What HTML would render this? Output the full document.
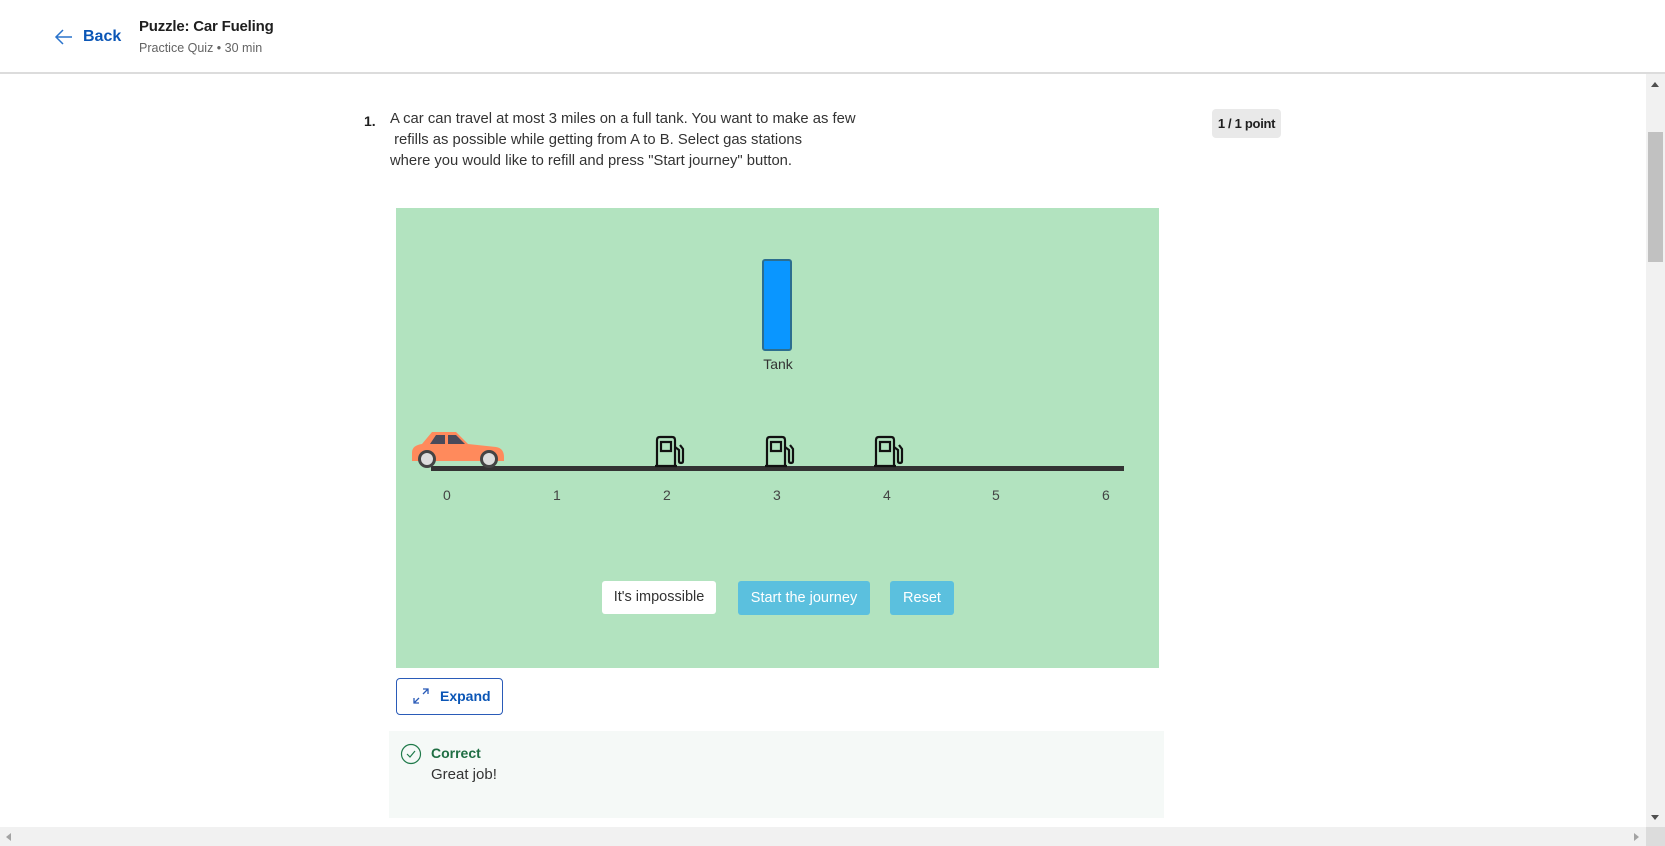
<!DOCTYPE html>
<html><head><meta charset="utf-8"><style>
*{box-sizing:border-box;margin:0;padding:0}
body{width:1665px;height:846px;overflow:hidden;background:#fff;font-family:"Liberation Sans",sans-serif;position:relative;color:#1f1f1f}
.a{position:absolute}
</style></head><body>
<div class="a" style="left:0;top:0;width:1665px;height:74px;border-bottom:2px solid #dcdcdc;background:#fff"></div>
<svg class="a" style="left:54px;top:27px" width="20" height="20" viewBox="0 0 20 20"><path d="M18 10H2M9 3L2 10l7 7" fill="none" stroke="#2a73cc" stroke-width="1.5"/></svg>
<div class="a" style="left:83px;top:28px;font-size:16px;font-weight:bold;color:#0b56b6">Back</div>
<div class="a" style="left:139px;top:18px;font-size:15px;font-weight:bold;color:#1f1f1f;letter-spacing:-0.2px">Puzzle: Car Fueling</div>
<div class="a" style="left:139px;top:41px;font-size:12.5px;color:#636363">Practice Quiz • 30 min</div>

<div class="a" style="left:364px;top:113px;font-size:14px;font-weight:bold">1.</div>
<div class="a" style="left:390px;top:109px;font-size:14.8px;line-height:21px;color:#333">A car can travel at most 3 miles on a full tank. You want to make as few<br>&nbsp;refills as possible while getting from A to B. Select gas stations<br>where you would like to refill and press "Start journey" button.</div>
<div class="a" style="left:1212px;top:109px;width:69px;height:29px;background:#e9e9e9;border-radius:4px;font-size:13px;font-weight:bold;line-height:29px;text-align:center;letter-spacing:-0.3px">1 / 1 point</div>

<div class="a" style="left:396px;top:208px;width:763px;height:460px;background:#b2e3bf"></div>
<div class="a" style="left:762px;top:259px;width:30px;height:92px;background:#0a96ff;border:2px solid #2c6e8f;border-radius:3px"></div>
<div class="a" style="left:762px;top:356px;width:32px;font-size:14px;color:#333;text-align:center">Tank</div>
<div class="a" style="left:431px;top:466px;width:693px;height:5px;background:#333"></div>
<div class="a" style="top:487px;left:0;width:0;font-size:14px;color:#444">
<span class="a" style="left:443px">0</span><span class="a" style="left:553px">1</span><span class="a" style="left:663px">2</span><span class="a" style="left:773px">3</span><span class="a" style="left:883px">4</span><span class="a" style="left:992px">5</span><span class="a" style="left:1102px">6</span></div>
<svg class="a" style="left:410px;top:428px" width="96" height="42" viewBox="0 0 96 42">
<path d="M22 4h24l12 12 28 3c6 1 8 5 8 10v4H2v-8c0-6 4-8 10-9z" fill="#ff8a5c"/>
<path d="M26 7h9v9H20zM38 7h8l9 9H38z" fill="#4a4a5a"/>
<circle cx="17" cy="31" r="9" fill="#444"/><circle cx="17" cy="31" r="6" fill="#ddd"/>
<circle cx="79" cy="31" r="9" fill="#444"/><circle cx="79" cy="31" r="6" fill="#ddd"/>
</svg>
<svg width="0" height="0" style="position:absolute"><defs><g id="p"><path d="M4 30V5q0-3 3-3h12q3 0 3 3v25M2 31h22M8 7h10v9H8z" fill="none" stroke="#111" stroke-width="2.2"/><path d="M22 12l4 3v11q0 2 2 2t2-2V14l-3-4" fill="none" stroke="#111" stroke-width="2.2"/></g></defs></svg>
<svg class="a" style="left:653px;top:435px" width="32" height="34"><use href="#p"/></svg>
<svg class="a" style="left:763px;top:435px" width="32" height="34"><use href="#p"/></svg>
<svg class="a" style="left:872px;top:435px" width="32" height="34"><use href="#p"/></svg>

<div class="a" style="left:602px;top:581px;width:114px;height:33px;background:#fff;border-radius:3px;font-size:14.5px;line-height:33px;text-align:center;color:#333">It's impossible</div>
<div class="a" style="left:738px;top:581px;width:132px;height:34px;background:#5bc0de;border-radius:3px;font-size:14.5px;line-height:34px;text-align:center;color:#fff">Start the journey</div>
<div class="a" style="left:890px;top:581px;width:64px;height:34px;background:#5bc0de;border-radius:3px;font-size:14.5px;line-height:34px;text-align:center;color:#fff">Reset</div>

<div class="a" style="left:396px;top:678px;width:107px;height:37px;border:1px solid #2a5bb8;border-radius:4px"></div>
<svg class="a" style="left:411px;top:686px" width="20" height="20" viewBox="0 0 20 20"><path d="M3 17L8 12M12 8L17 3M12 3h5v5M3 12v5h5" fill="none" stroke="#2a5bb8" stroke-width="1.3"/></svg>
<div class="a" style="left:440px;top:688px;font-size:14px;font-weight:bold;color:#0b56b6">Expand</div>

<div class="a" style="left:389px;top:731px;width:775px;height:87px;background:#f5f9f7"></div>
<svg class="a" style="left:400px;top:743px" width="22" height="22" viewBox="0 0 22 22"><circle cx="11" cy="11" r="9.5" fill="none" stroke="#1f7a4a" stroke-width="1.2"/><path d="M7 11l3 3 5-6" fill="none" stroke="#1f7a4a" stroke-width="1.2"/></svg>
<div class="a" style="left:431px;top:745px;font-size:14px;font-weight:bold;color:#1f6e43">Correct</div>
<div class="a" style="left:431px;top:766px;font-size:15px;color:#333">Great job!</div>

<div class="a" style="left:1646px;top:74px;width:19px;height:753px;background:#f1f1f1"></div>
<div class="a" style="left:1648px;top:132px;width:15px;height:130px;background:#c1c1c1"></div>
<div class="a" style="left:1651px;top:82px;border:4px solid transparent;border-bottom:5px solid #505050;border-top:0"></div>
<div class="a" style="left:1651px;top:815px;border:4px solid transparent;border-top:5px solid #505050;border-bottom:0"></div>
<div class="a" style="left:0;top:827px;width:1646px;height:19px;background:#f1f1f1"></div>
<div class="a" style="left:1646px;top:827px;width:19px;height:19px;background:#dcdcdc"></div>
<div class="a" style="left:6px;top:833px;border:4px solid transparent;border-right:5px solid #a3a3a3;border-left:0"></div>
<div class="a" style="left:1634px;top:833px;border:4px solid transparent;border-left:5px solid #a3a3a3;border-right:0"></div>
</body></html>
